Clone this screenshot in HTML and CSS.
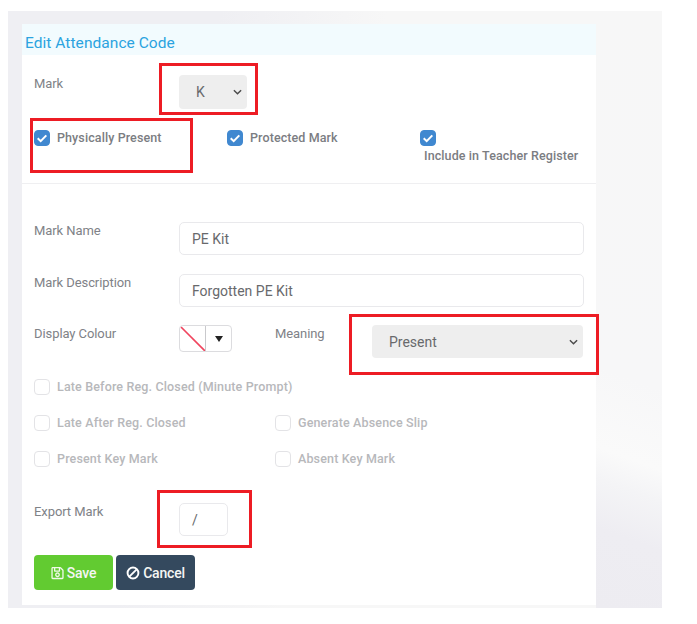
FILE: index.html
```html
<!DOCTYPE html>
<html lang="en">
<head>
<meta charset="utf-8">
<title>Edit Attendance Code</title>
<link rel="stylesheet" href="styles.css">
</head>
<body>
<div class="backdrop">
  <main class="card">
    <h1 class="card-title">Edit Attendance Code</h1>
    <form class="form">
      <div class="row row-mark">
        <label class="label">Mark</label>
        <div class="select select-small"><span>K</span>
          <svg class="chev" viewBox="0 0 10 6"><path d="M1 1l4 4 4-4"/></svg>
        </div>
        <span class="callout callout-mark"></span>
      </div>
      <div class="row-flags">
        <div class="check strong flag-one"><span class="box on"><svg viewBox="0 0 16 16"><path d="M3.7 8.3l3 2.9 5.6-5.8"/></svg></span><span>Physically Present</span><span class="callout callout-present"></span></div>
        <div class="check strong flag-two"><span class="box on"><svg viewBox="0 0 16 16"><path d="M3.7 8.3l3 2.9 5.6-5.8"/></svg></span><span>Protected Mark</span></div>
        <div class="flag-three strong"><span class="box on"><svg viewBox="0 0 16 16"><path d="M3.7 8.3l3 2.9 5.6-5.8"/></svg></span><span class="flag-text">Include in Teacher Register</span></div>
      </div>
      <div class="divider"></div>
      <div class="row row-name">
        <label class="label">Mark Name</label>
        <div class="input wide">PE Kit</div>
      </div>
      <div class="row row-desc">
        <label class="label">Mark Description</label>
        <div class="input wide">Forgotten PE Kit</div>
      </div>
      <div class="row row-colour">
        <label class="label">Display Colour</label>
        <div class="picker">
          <span class="swatch"><svg viewBox="0 0 25 25"><path d="M1 1l24 24"/></svg></span>
          <span class="picker-btn"><svg viewBox="0 0 8 6"><path d="M0 0h8L4 6z"/></svg></span>
        </div>
        <label class="label meaning-label">Meaning</label>
        <div class="select select-wide"><span>Present</span>
          <svg class="chev" viewBox="0 0 10 6"><path d="M1 1l4 4 4-4"/></svg>
        </div>
        <span class="callout callout-meaning"></span>
      </div>
      <div class="options">
        <div class="check muted span-two"><span class="box"></span><span>Late Before Reg. Closed (Minute Prompt)</span></div>
        <div class="check muted"><span class="box"></span><span>Late After Reg. Closed</span></div>
        <div class="check muted"><span class="box"></span><span>Generate Absence Slip</span></div>
        <div class="check muted"><span class="box"></span><span>Present Key Mark</span></div>
        <div class="check muted"><span class="box"></span><span>Absent Key Mark</span></div>
      </div>
      <div class="row row-export">
        <label class="label">Export Mark</label>
        <div class="input narrow">/</div>
        <span class="callout callout-export"></span>
      </div>
      <div class="actions">
        <button type="button" class="btn btn-save">
          <svg viewBox="0 0 448 512"><path d="M433.9 129.9l-83.9-83.9A48 48 0 0 0 316.1 32H48C21.5 32 0 53.5 0 80v352c0 26.5 21.5 48 48 48h352c26.5 0 48-21.5 48-48V163.9a48 48 0 0 0-14.1-34zM272 80v80H144V80h128zm122 352H54a6 6 0 0 1-6-6V86a6 6 0 0 1 6-6h42v104c0 13.3 10.7 24 24 24h176c13.3 0 24-10.7 24-24V83.900l78.200 78.200a6 6 0 0 1 1.800 4.200V426a6 6 0 0 1-6 6zM224 232c-48.500 0-88 39.500-88 88s39.500 88 88 88 88-39.500 88-88-39.500-88-88-88zm0 128c-22.100 0-40-17.900-40-40s17.900-40 40-40 40 17.900 40 40-17.900 40-40 40z"/></svg>
          <span>Save</span>
        </button>
        <button type="button" class="btn btn-cancel">
          <svg viewBox="0 0 16 16"><circle cx="8" cy="8" r="6.2"/><path d="M3.800 12.200l8.400-8.400"/></svg>
          <span>Cancel</span>
        </button>
      </div>
    </form>
  </main>
</div>
</body>
</html>
```

FILE: styles.css
```css
* { box-sizing: border-box; }
html, body { margin: 0; padding: 0; background: #fff; }
body {
  width: 697px;
  height: 624px;
  overflow: hidden;
  padding: 11px 35px 16px 8px;
  font-family: Roboto, "Liberation Sans", sans-serif;
  font-size: 13px;
  color: #74767b;
}
.backdrop {
  height: 597px;
  padding: 13px 66px 3px 14px;
  background:
    linear-gradient(200deg, #f7f7f7 0%, #f7f7f8 61%, #fafafa 74%, #f4f4f6 79%, #eeedf2 87%, #edecf1 100%) right top / 66px 100% no-repeat,
    linear-gradient(100deg, #efeff3 0%, #efeff3 28%, #f7f7f7 50%, #f7f7f7 100%);
}
.card {
  height: 581px;
  background: #fff;
}
.card-title {
  margin: 0;
  height: 31px;
  padding: 10px 0 0 3px;
  background: #f2fbfe;
  color: #2ba3e0;
  font-size: 15.500px;
  font-weight: 400;
  line-height: 18px;
  letter-spacing: 0.050px;
}
.form { padding: 0 12px; }
.row { position: relative; display: flex; align-items: flex-start; }
.label {
  flex: 0 0 145px;
  line-height: 16px;
  color: #808287;
  letter-spacing: -0.080px;
}
.row-mark { padding-top: 20px; }
.row-mark .label { margin-top: 1px; }
.select {
  display: flex;
  align-items: center;
  justify-content: space-between;
  height: 34px;
  background: #eeeeee;
  border-radius: 4px;
  color: #68696c;
  font-size: 14px;
}
.select-small { width: 68px; padding: 0 5px 0 17px; }
.select-wide { flex: none; width: 211px; padding: 0 5px 0 17px; height: 33px; }
.chev { width: 9px; height: 6px; fill: none; stroke: #4a4a4a; stroke-width: 1.600; }
.row-flags { position: relative; display: flex; height: 74px; padding-top: 21px; }
.check { display: flex; align-items: center; gap: 7px; height: 16px; line-height: 16px; }
.strong { font-weight: 500; color: #7b7d82; font-size: 12.500px; letter-spacing: 0.100px; }
.flag-one, .flag-two { flex: 0 0 193px; }
.flag-one { position: relative; }
.flag-three { flex: 0 0 160px; }
.flag-text { display: block; margin: 2px 0 0 4px; line-height: 16px; white-space: nowrap; }
.box {
  flex: none;
  display: block;
  width: 16px;
  height: 16px;
  border: 1px solid #e3e3e6;
  border-radius: 4px;
  background: #fff;
}
.box.on { background: #4088d0; border-color: #4088d0; }
.box svg { display: block; width: 16px; height: 16px; margin: -1px; fill: none; stroke: #fff; stroke-width: 2; }
.divider { height: 1px; margin: 0 -12px; background: #efeff1; }
.input {
  display: flex;
  align-items: center;
  border: 1px solid #e9e9ec;
  border-radius: 5px;
  background: #fff;
  color: #68696c;
  font-size: 14px;
  padding: 0 12px;
}
.wide { width: 405px; }
.narrow { width: 49px; height: 33px; }
.row-name { padding-top: 38px; }
.row-name .label { margin-top: 1px; }
.row-name .input { height: 33px; }
.row-desc { padding-top: 19px; }
.row-desc .label { margin-top: 1px; }
.row-desc .input { height: 33px; }
.row-colour { padding-top: 18px; height: 52px; }
.row-colour .label { margin-top: 1px; }
.picker {
  flex: none;
  display: flex;
  width: 53px;
  height: 27px;
  border: 1px solid #dcdcdf;
  border-radius: 4px;
  overflow: hidden;
}
.swatch { width: 26px; border-right: 1px solid #c9c9cc; }
.swatch svg { display: block; width: 25px; height: 25px; fill: none; stroke: #f0455f; stroke-width: 1.700; }
.picker-btn { flex: 1; display: flex; align-items: center; justify-content: center; }
.picker-btn svg { width: 8px; height: 6px; fill: #222; }
.row-colour .meaning-label { flex: 0 0 97px; margin-left: 43px; }
.options {
  display: grid;
  grid-template-columns: 241px 1fr;
  grid-auto-rows: 16px;
  row-gap: 20px;
  padding-top: 20px;
}
.span-two { grid-column: 1 / 3; }
.muted { color: #b7b8bb; font-weight: 500; font-size: 12.500px; letter-spacing: 0.150px; }
.row-export { padding-top: 36px; }
.row-export .label { margin-top: 1px; }
.actions { display: flex; gap: 3px; padding-top: 19px; }
.btn {
  display: flex;
  align-items: center;
  justify-content: center;
  gap: 3px;
  width: 79px;
  height: 35px;
  border: 0;
  padding: 0;
  border-radius: 4px;
  color: #f4f6f4;
  font-family: inherit;
  font-size: 14px;
  font-weight: 500;
  letter-spacing: -0.200px;
}
.btn-save { background: #62cb31; }
.btn-cancel { background: #34495e; }
.btn-save svg { width: 13px; height: 14px; fill: #f0fae9; }
.btn-cancel svg { width: 14px; height: 14px; fill: none; stroke: #fff; stroke-width: 2.200; }
.callout { position: absolute; border: 3px solid #ed1c24; pointer-events: none; }
.callout-mark { left: 125px; top: 8px; width: 99px; height: 52px; }
.callout-present { left: -4px; top: -12px; width: 163px; height: 55px; }
.callout-meaning { left: 315px; top: 7px; width: 250px; height: 61px; }
.callout-export { left: 123px; top: 23px; width: 95px; height: 58px; }
```
